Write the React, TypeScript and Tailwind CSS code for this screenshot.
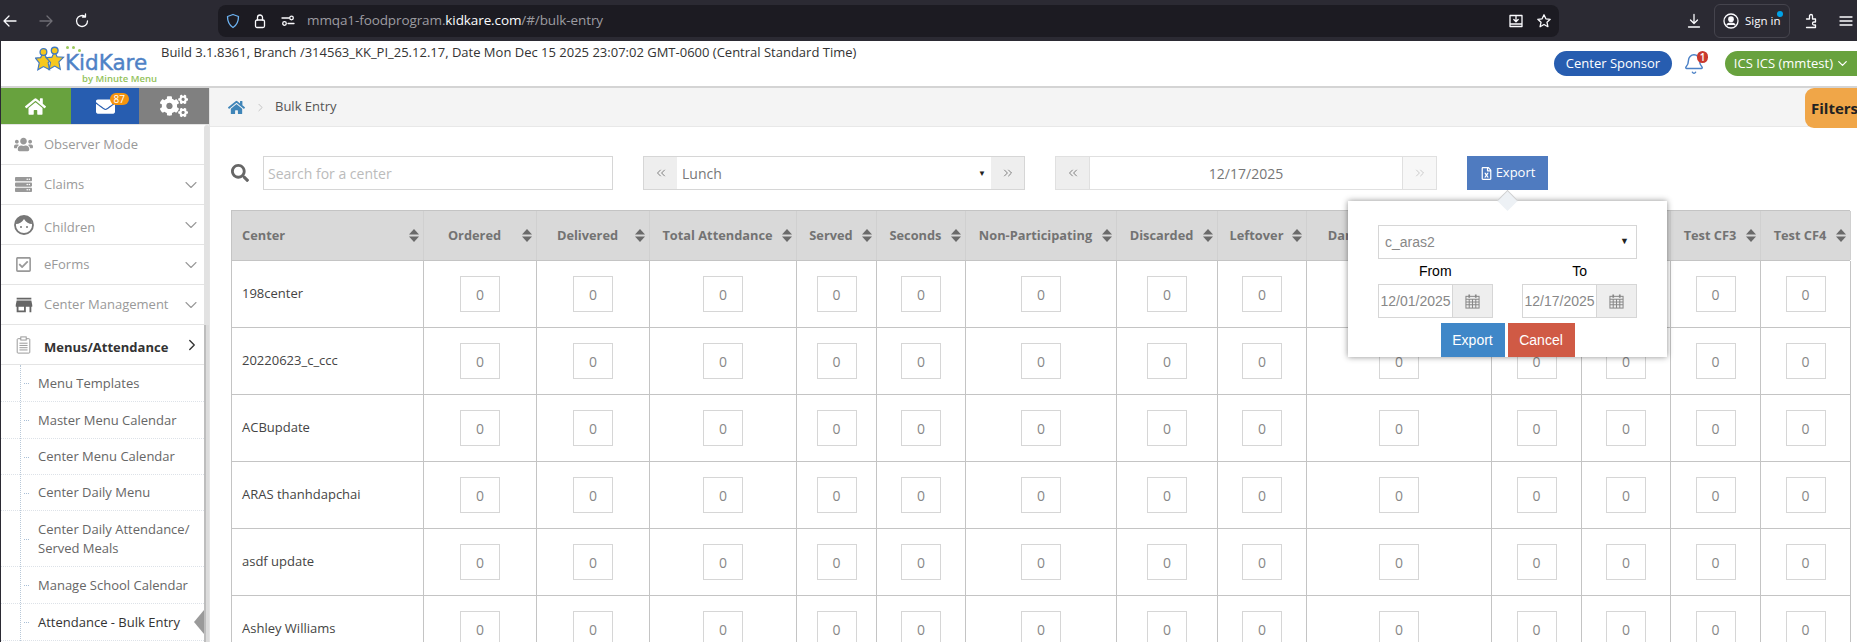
import React from "react";
import { FaHome, FaEnvelope, FaCogs, FaUsers, FaServer, FaRegCheckSquare, FaSearch, FaRegFileExcel } from "react-icons/fa";
import { MdStore } from "react-icons/md";
import { Bell, ChevronDown, ChevronRight, ChevronsLeft, ChevronsRight } from "lucide-react";

const cols = "grid grid-cols-[192px_113px_113px_147px_80px_89px_151px_101px_89px_185px_90px_89px_90px_90px]";
const heads = ["Center", "Ordered", "Delivered", "Total Attendance", "Served", "Seconds", "Non-Participating", "Discarded", "Leftover", "Damaged/Destroyed", "", "", "Test CF3", "Test CF4"];
const rows = ["198center", "20220623_c_ccc", "ACBupdate", "ARAS thanhdapchai", "asdf update", "Ashley Williams"];

function ChromeIcon({ children, className = "" }: { children: React.ReactNode; className?: string }) {
  return (
    <svg viewBox="0 0 16 16" fill="none" stroke="currentColor" strokeWidth="1.3" strokeLinecap="round" strokeLinejoin="round" className={"w-4 h-4 shrink-0 " + className}>
      {children}
    </svg>
  );
}

function BrowserBar() {
  return (
    <div className="flex items-center h-[41px] bg-[#2b2a33] text-[#fbfbfe] shrink-0">
      <div className="flex items-center w-[218px] pl-[2px] gap-[20px]">
        <ChromeIcon><path d="M14 8H2M7 3 2 8l5 5" /></ChromeIcon>
        <ChromeIcon className="text-[#6f6e75]"><path d="M2 8h12M9 3l5 5-5 5" /></ChromeIcon>
        <ChromeIcon><path d="M13.5 8A5.500 5.500 0 1 1 11 3.400M11.500 1v3h-3" /></ChromeIcon>
      </div>
      <div className="flex items-center w-[1341px] h-[32px] bg-[#1c1b22] rounded-lg pl-[7px] pr-[7px]">
        <ChromeIcon className="text-[#6db3f2]"><path d="M8 1.500 13.500 3.500c0 5-1.500 8.500-5.500 11C4 12 2.500 8.500 2.500 3.500z" /></ChromeIcon>
        <ChromeIcon className="ml-[11px]"><rect x="3.500" y="7" width="9" height="7.500" rx="1.500" /><path d="M5.500 7V4.500a2.500 2.500 0 0 1 5 0V7" /></ChromeIcon>
        <ChromeIcon className="ml-[12px]"><circle cx="4.500" cy="10.500" r="1.800" /><circle cx="11.500" cy="5" r="1.800" /><path d="M2 5h7M8 10.500h6" /></ChromeIcon>
        <div className="ml-[11px] text-[13.500px] font-['Open_Sans',sans-serif] text-[#9c9ba1] tracking-[-0.1px]">
          mmqa1-foodprogram.<span className="text-[#fbfbfe]">kidkare.com</span>/#/bulk-entry
        </div>
        <ChromeIcon className="ml-auto"><path d="M2 2.500h12v11H2zM2 11h12M8 3.500V8.500M5.800 6.500 8 8.700l2.200-2.200" /></ChromeIcon>
        <ChromeIcon className="ml-[12px]"><path d="m8 1.800 1.900 4 4.300.5-3.200 3 .9 4.400L8 11.500l-3.900 2.200.9-4.400-3.200-3 4.300-.5z" /></ChromeIcon>
      </div>
      <ChromeIcon className="ml-[127px]"><path d="M8 1.500V10M4.500 7 8 10.500 11.500 7M2.500 14h11" /></ChromeIcon>
      <div className="relative flex items-center ml-[12px] w-[76px] h-[34px] rounded-md border border-[#45444d] pl-[8px]">
        <ChromeIcon><circle cx="8" cy="8" r="7" /><circle cx="8" cy="6.200" r="2.200" fill="currentColor" /><path d="M4 12c1-2.500 7-2.500 8 0" fill="currentColor" /></ChromeIcon>
        <span className="ml-[6px] text-[11.500px] font-['Open_Sans',sans-serif]">Sign in</span>
        <span className="absolute right-[6px] top-[6px] w-[6px] h-[6px] rounded-full bg-[#00a2e8]" />
      </div>
      <ChromeIcon className="ml-[13px]"><path d="M3.500 6h3V3a1.500 1.500 0 0 1 3 0v3h3v3h-1.500a1.500 1.500 0 0 0 0 3h1.500v2.500h-9" /></ChromeIcon>
      <ChromeIcon className="ml-[19px]"><path d="M2 4h12M2 8h12M2 12h12" /></ChromeIcon>
    </div>
  );
}

function Logo() {
  return (
    <div className="flex items-start ml-[34px] w-[125px] pt-[5px] shrink-0">
      <svg viewBox="0 0 32 28" className="w-[30px] h-[27px] shrink-0">
        <path d="M9 6 12 12l7 .5-5 5 1.500 7.500L9 21.500 3 25l1.500-7.500L0.500 12.500 6 12z" fill="#f6c81e" stroke="#3f78c0" strokeWidth="1.200" />
        <path d="M21 5 23.500 11l7 .5-5 5 1.500 8L21 21l-6 3.500 1.500-7.500-4.500-5 6-.5z" fill="#f6c81e" stroke="#3f78c0" strokeWidth="1.200" />
        <circle cx="9" cy="6" r="3.600" fill="#f6c81e" stroke="#3f78c0" strokeWidth="1.400" />
        <circle cx="21" cy="4.500" r="3.600" fill="#f6c81e" stroke="#3f78c0" strokeWidth="1.400" />
      </svg>
      <div className="relative flex flex-col items-end w-[92px] pt-[7px]">
        <span className="absolute left-[1px] top-[0px] w-[3px] h-[3px] rounded-full bg-[#9cc95c]" />
        <span className="absolute left-[7px] top-[0px] w-[3px] h-[3px] rounded-full bg-[#9cc95c]" />
        <span className="absolute left-[13px] top-[3px] w-[3px] h-[3px] rounded-full bg-[#9cc95c]" />
        <div className="self-start text-[21.500px] leading-[20px] font-['DejaVu_Sans',sans-serif] text-[#4f82c6] [-webkit-text-stroke:0.4px_#4f82c6]">KidKare</div>
        <div className="text-[9.500px] leading-[11px] font-['Open_Sans',sans-serif] font-semibold text-[#93c25a] whitespace-nowrap">by Minute Menu</div>
      </div>
    </div>
  );
}

function Header() {
  return (
    <div className="flex h-[47px] bg-white border-b-2 border-[#d4d4d4] shrink-0">
      <Logo />
      <div className="pt-[2px] ml-[1px] text-[13px] leading-[18px] text-[#333] whitespace-nowrap">
        Build 3.1.8361, Branch /314563_KK_PI_25.12.17, Date Mon Dec 15 2025 23:07:02 GMT-0600 (Central Standard Time)
      </div>
      <div className="ml-auto flex items-start pt-[10px]">
        <div className="flex items-center justify-center w-[118px] h-[25px] rounded-full bg-[#275db0] text-white text-[13px]">Center Sponsor</div>
        <div className="relative ml-[11px] mr-[14px] pt-[2px] w-[28px] text-[#4a80c6]">
          <Bell size={22} strokeWidth={1.6} />
          <span className="absolute left-[14px] top-0 flex items-center justify-center w-[11px] h-[12px] rounded-full bg-[#c9392e] text-white text-[10px] font-semibold">1</span>
        </div>
        <div className="flex items-center justify-end w-[132px] h-[25px] rounded-l-full rounded-r-lg bg-[#68a23e] text-white text-[13px] pr-[7px] whitespace-nowrap">
          ICS ICS (mmtest)<ChevronDown size={15} strokeWidth={2} className="ml-[2px]" />
        </div>
      </div>
    </div>
  );
}

function ChildFace() {
  return (
    <svg viewBox="0 0 20 20" className="w-[20px] h-[20px]">
      <circle cx="10" cy="10" r="9" fill="#fff" stroke="#777" strokeWidth="1.800" />
      <path d="M2 9c3 0 6-1.500 8-5 2 3.500 5 5 8 5 0-5-3-8-8-8S2 4 2 9z" fill="#777" />
      <circle cx="7" cy="12" r="1" fill="#777" />
      <circle cx="13" cy="12" r="1" fill="#777" />
    </svg>
  );
}

function ClipIcon() {
  return (
    <svg viewBox="0 0 16 20" fill="none" stroke="#999" strokeWidth="1.100" className="w-[15px] h-[18px]">
      <rect x="1" y="3" width="14" height="16" rx="1" />
      <rect x="5" y="1" width="6" height="3.500" fill="#fff" />
      <path d="M3.500 8h9M3.500 10.500h9M3.500 13h9M3.500 15.500h9" />
    </svg>
  );
}

function CalIcon() {
  return (
    <svg viewBox="0 0 16 16" fill="none" stroke="#888" strokeWidth="1.100" className="w-[15px] h-[15px]">
      <rect x="1" y="2.500" width="14" height="12.500" />
      <path d="M1 5.500h14M1 8.500h14M1 11.500h14M4.500 5.500V15M8 5.500V15M11.500 5.500V15" />
      <path d="M4.500 0.500v3.500M11.500 0.500v3.500" strokeWidth="1.800" />
    </svg>
  );
}

function SortIcon() {
  return (
    <svg viewBox="0 0 10 13" className="w-[10px] h-[13px] shrink-0" fill="#6a6a6a">
      <path d="M5 0l5 5.500H0z" />
      <path d="M0 7.500h10L5 13z" />
    </svg>
  );
}

function MainItem({ icon, label, chevron = true, active = false, textOffset = "pt-[1px]" }: { icon: React.ReactNode; label: string; chevron?: boolean; active?: boolean; textOffset?: string }) {
  return (
    <div className="flex items-center h-[40px] border-b border-[#e4e4e4]">
      <div className="flex items-center justify-center w-[43px] pl-[2px] text-[#999] text-[17px]">{icon}</div>
      <span className={"text-[13px] " + textOffset + (active ? " font-bold text-[#333]" : " text-[#999]")}>{label}</span>
      {chevron && (active
        ? <ChevronRight size={18} strokeWidth={1.8} className="ml-auto mr-[3px] text-[#333]" />
        : <ChevronDown size={20} strokeWidth={1.3} className="ml-auto mr-[3px] text-[#999]" />)}
    </div>
  );
}

function SubItem({ label, h, current = false }: { label: React.ReactNode; h: string; current?: boolean }) {
  return (
    <div className={"relative flex items-center pl-[37px] border-b border-dotted border-[#dde2e8] text-[13px] leading-[19px] " + h + (current ? " text-[#333]" : " text-[#666]")}>
      <span className="absolute left-[23px] top-[50%] w-[5px] border-t border-dotted border-[#a9bfd6]" />
      <span>{label}</span>
      {current && (
        <svg viewBox="0 0 10 24" className="absolute right-0 top-[6px] w-[10px] h-[24px]">
          <path d="M10 0v24L0 12z" fill="#9a9a9a" />
        </svg>
      )}
    </div>
  );
}

function Sidebar() {
  return (
    <div className="flex flex-col w-[209px] shrink-0 border-r border-[#e4e4e4] overflow-hidden">
      <div className="flex h-[37px] shrink-0 text-white border-b border-[#e4e4e4]">
        <div className="flex items-center justify-center w-[70px] bg-[#68a23e] text-[21px]"><FaHome /></div>
        <div className="relative flex items-center justify-center w-[69px] bg-[#275db0] text-[19px]">
          <FaEnvelope />
          <span className="absolute left-[39px] top-[5px] flex items-center justify-center w-[19px] h-[12px] rounded-full bg-[#f5940d] text-[10px]">87</span>
        </div>
        <div className="flex items-center justify-center w-[70px] bg-[#808080] text-[28px]"><FaCogs /></div>
      </div>
      <div className="flex flex-1 min-h-0">
        <div className="w-[203px] shrink-0">
          <MainItem icon={<FaUsers className="text-[19px]" />} label="Observer Mode" chevron={false} />
          <MainItem icon={<FaServer />} label="Claims" />
          <MainItem icon={<ChildFace />} label="Children" textOffset="pt-[6px]" />
          <MainItem icon={<FaRegCheckSquare />} label="eForms" />
          <MainItem icon={<MdStore className="text-[22px] text-[#666]" />} label="Center Management" />
          <MainItem icon={<ClipIcon />} label="Menus/Attendance" active textOffset="pt-[6px]" />
          <div className="relative">
            <span className="absolute left-[19px] top-0 bottom-0 border-l border-dotted border-[#b8c8d8]" />
            <SubItem h="h-[37px]" label="Menu Templates" />
            <SubItem h="h-[37px]" label="Master Menu Calendar" />
            <SubItem h="h-[36px]" label="Center Menu Calendar" />
            <SubItem h="h-[36px]" label="Center Daily Menu" />
            <SubItem h="h-[56px]" label={<>Center Daily Attendance/<br />Served Meals</>} />
            <SubItem h="h-[37px]" label="Manage School Calendar" />
            <SubItem h="h-[37px]" label="Attendance - Bulk Entry" current />
          </div>
        </div>
        <div className="flex flex-col w-[6px] shrink-0">
          <div className="h-[200px] bg-[#e2e2e2] rounded-t-sm shrink-0" />
          <div className="flex flex-1">
            <div className="w-[2px] bg-[#bdbdbd]" />
            <div className="flex-1 bg-[#dcdcdc]" />
          </div>
        </div>
      </div>
    </div>
  );
}

function Addon({ children, faded = false }: { children: React.ReactNode; faded?: boolean }) {
  return (
    <div className={"flex items-center justify-center w-[33px] shrink-0 " + (faded ? "text-[#c4c4c4] bg-[#f7f7f7]" : "text-[#707070] bg-[#eeeeee]")}>
      {children}
    </div>
  );
}

function ExportPopover() {
  return (
    <div className="absolute left-[-119px] top-[45px] z-10 w-[319px] h-[156px] bg-white shadow-[0_0_6px_rgba(0,0,0,0.45)] font-['Liberation_Sans',sans-serif] text-[14px]">
      <span className="absolute left-[152px] -top-[8px] w-[15px] h-[15px] rotate-45 bg-[#edf1f5] border-l border-t border-[#cfcfcf]" />
      <div className="relative px-[30px] pt-[24px]">
        <div className="flex items-center justify-between h-[34px] border border-[#d6d6d6] bg-white text-[#888] pl-[6px] pr-[7px]">
          <span>c_aras2</span>
          <span className="text-[#222] text-[9px]">▼</span>
        </div>
        <div className="flex h-[25px] items-center text-black">
          <span className="w-[115px] text-center">From</span>
          <span className="ml-[30px] w-[115px] text-center">To</span>
        </div>
        <div className="flex justify-between">
          {["12/01/2025", "12/17/2025"].map((d) => (
            <div key={d} className="flex w-[115px] h-[34px] border border-[#d6d6d6] text-[#888]">
              <div className="flex items-center justify-center flex-1 whitespace-nowrap">{d}</div>
              <div className="flex items-center justify-center w-[40px] bg-[#eeeeee] border-l border-[#d6d6d6]"><CalIcon /></div>
            </div>
          ))}
        </div>
        <div className="flex justify-center gap-[3px] mt-[5px] text-white">
          <div className="flex items-center justify-center w-[64px] h-[34px] bg-[#3f87c8]">Export</div>
          <div className="flex items-center justify-center w-[67px] h-[34px] bg-[#d05a45]">Cancel</div>
        </div>
      </div>
    </div>
  );
}

function Toolbar() {
  return (
    <div className="flex items-stretch h-[34px] text-[14px] text-[#777]">
      <div className="flex items-center w-[32px] text-[18px] text-[#666]"><FaSearch /></div>
      <input readOnly placeholder="Search for a center" className="w-[350px] border border-[#d6d6d6] px-[4px] text-[14px] placeholder:text-[#bbb] outline-none" />
      <div className="flex ml-[30px] w-[382px] border border-[#d6d6d6]">
        <Addon><ChevronsLeft size={14} strokeWidth={1.5} /></Addon>
        <div className="flex items-center justify-between flex-1 px-[5px]">
          <span>Lunch</span>
          <span className="text-[#222] text-[8px]">▼</span>
        </div>
        <Addon><ChevronsRight size={14} strokeWidth={1.5} /></Addon>
      </div>
      <div className="flex ml-[30px] w-[382px] border border-[#e0e0e0]">
        <Addon><ChevronsLeft size={14} strokeWidth={1.5} /></Addon>
        <div className="flex items-center justify-center flex-1 border-x border-[#e0e0e0]">12/17/2025</div>
        <Addon faded><ChevronsRight size={14} strokeWidth={1.5} /></Addon>
      </div>
      <div className="relative ml-[30px]">
        <div className="flex items-center justify-center gap-[3px] w-[81px] h-[34px] bg-[#4f7bc0] text-white text-[13px]">
          <FaRegFileExcel className="text-[13px]" />Export
        </div>
        <ExportPopover />
      </div>
    </div>
  );
}

function DataTable() {
  return (
    <div className="mt-[20px] w-[1619px] border-l border-t border-[#c4c4c4]">
      <div className={cols + " h-[50px] bg-[#d9d9d9] border-b border-[#c4c4c4]"}>
        {heads.map((h, i) => (
          <div key={i} className={"flex items-center border-r border-[#d0d0d0] pr-[4px] text-[12.800px] font-bold text-[#737373] overflow-hidden " + (i === 0 ? "pl-[10px]" : "pl-[3px]")}>
            <span className={"flex-1 whitespace-nowrap " + (i === 0 ? "" : "text-center")}>{h}</span>
            <SortIcon />
          </div>
        ))}
      </div>
      {rows.map((r) => (
        <div key={r} className={cols + " h-[67px]"}>
          {heads.map((_, i) => (
            <div key={i} className={"flex items-center border-r border-b border-[#c4c4c4] " + (i === 0 ? "pl-[10px] text-[13px] text-[#444]" : "justify-center")}>
              {i === 0 ? r : (
                <input readOnly value="0" className="w-[40px] h-[36px] border border-[#d6d6d6] text-center text-[14px] text-[#888] outline-none" />
              )}
            </div>
          ))}
        </div>
      ))}
    </div>
  );
}

export default function App() {
  return (
    <div className="flex flex-col h-[642px] w-[1857px] overflow-hidden bg-[#2b2a33] font-['Open_Sans',sans-serif]">
      <BrowserBar />
      <div className="flex flex-col flex-1 min-h-0 ml-[1px] bg-white">
        <Header />
        <div className="flex flex-1 min-h-0">
          <Sidebar />
          <div className="flex-1 min-w-0">
            <div className="relative flex items-center h-[39px] bg-[#f4f4f4] border-b border-[#e8e8e8]">
              <FaHome className="ml-[18px] text-[#3f85b8] text-[17px]" />
              <ChevronRight size={13} strokeWidth={1.2} className="ml-[9px] text-[#aaa]" />
              <span className="ml-[8px] text-[13px] text-[#555]">Bulk Entry</span>
              <div className="absolute right-0 top-0 flex items-center w-[52px] h-[40px] pl-[6px] rounded-l-[9px] bg-[#f0a648] text-[15px] font-bold text-[#222] whitespace-nowrap overflow-hidden z-20">Filters</div>
            </div>
            <div className="pl-[21px] pt-[29px]">
              <Toolbar />
              <DataTable />
            </div>
          </div>
        </div>
      </div>
    </div>
  );
}
